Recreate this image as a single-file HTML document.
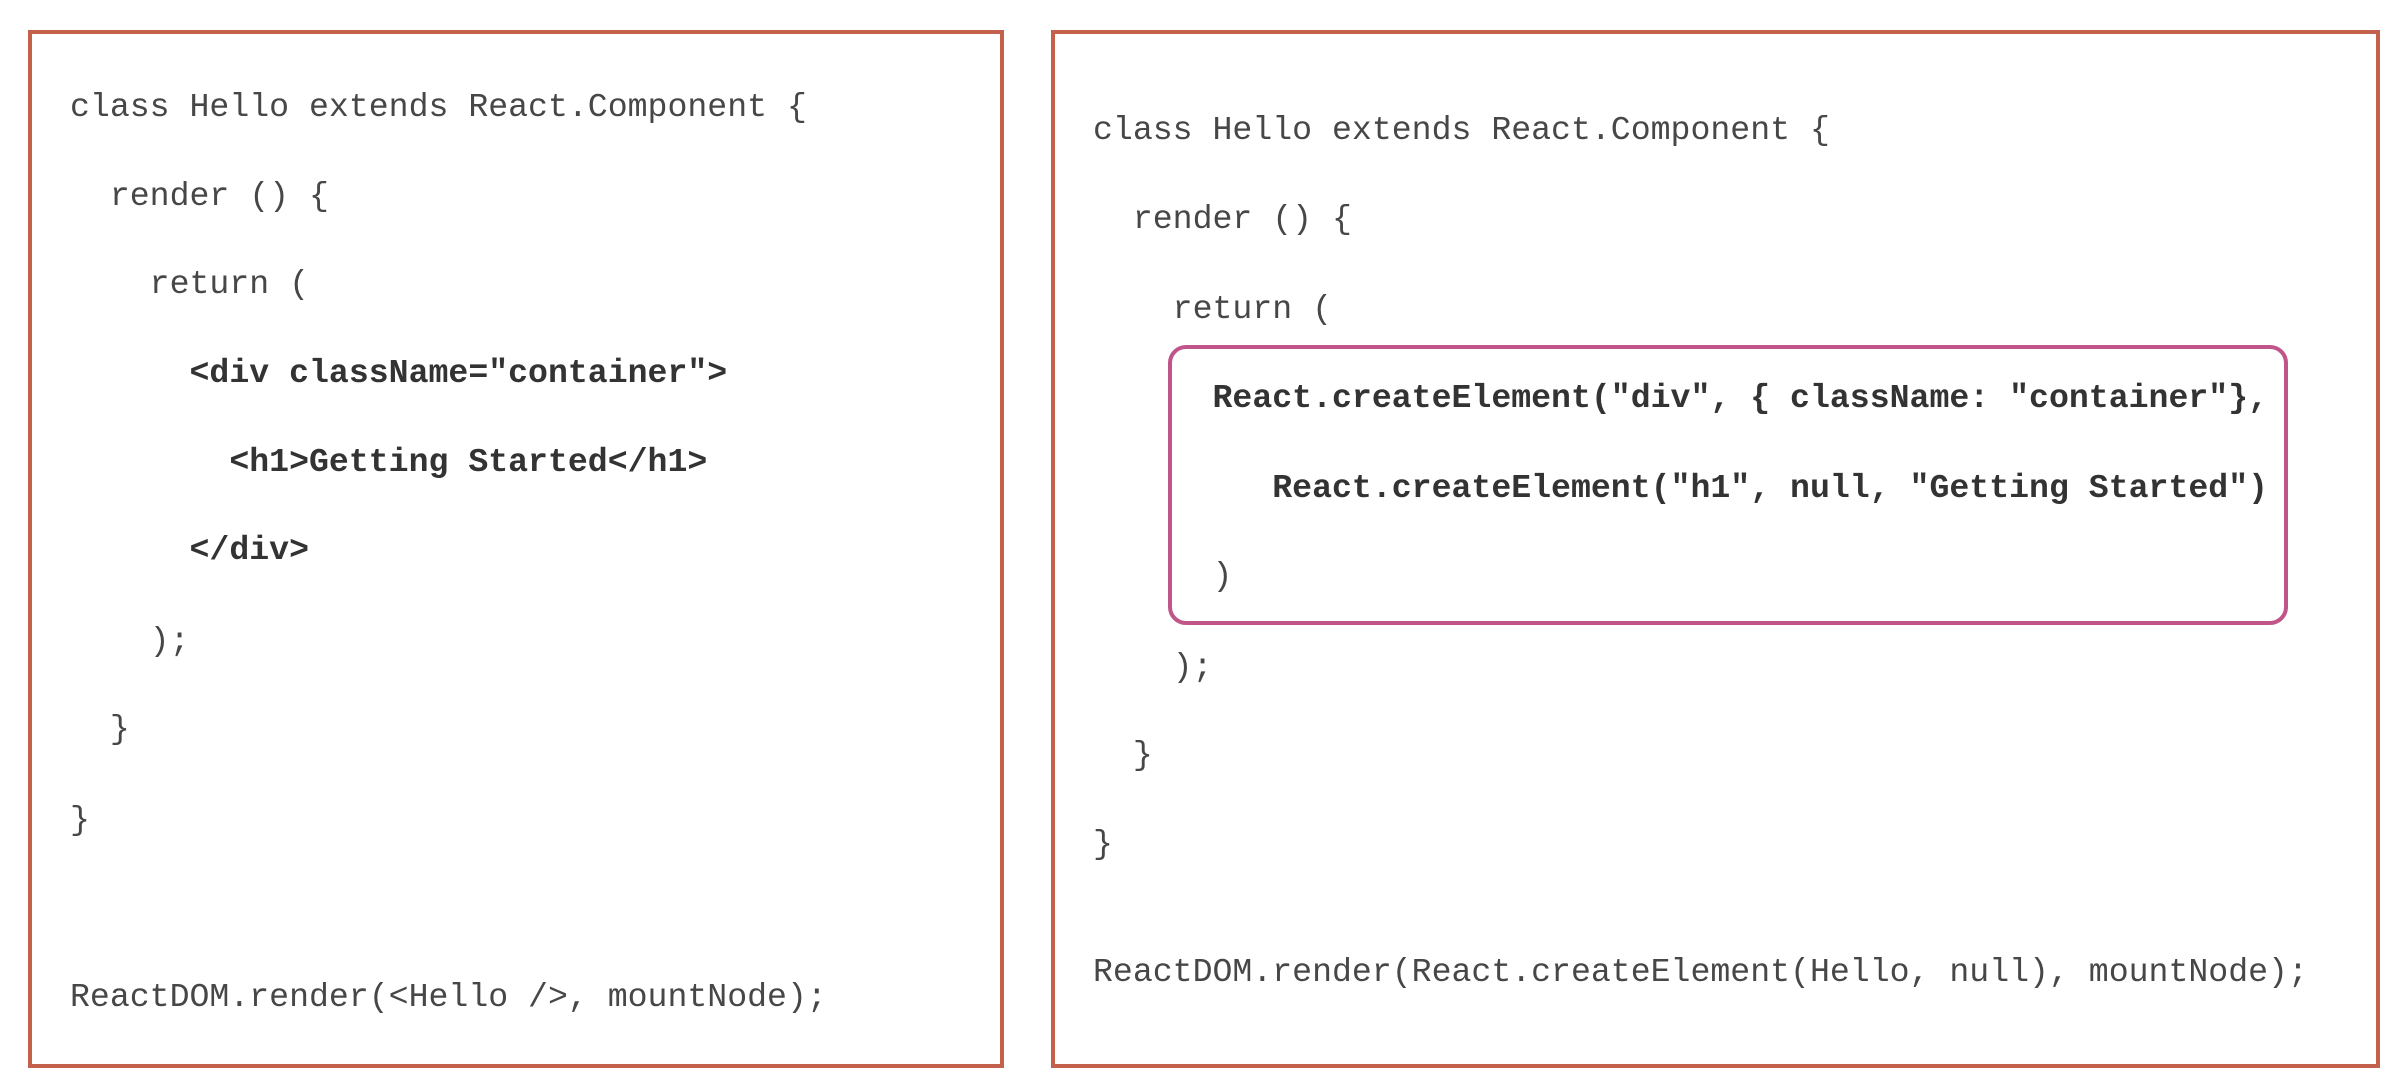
<!DOCTYPE html>
<html><head><meta charset="utf-8"><style>
html,body{margin:0;padding:0;background:#fff;width:2398px;height:1076px;overflow:hidden}
.box{position:absolute;border:4px solid #c3614c;box-sizing:border-box}
.l{position:absolute;font-family:"Liberation Mono",monospace;font-size:33.2px;line-height:40px;height:40px;color:#474747;white-space:pre}
.b{font-weight:bold;color:#333}
.pink{position:absolute;border:4.5px solid #c0558a;border-radius:18px;box-sizing:border-box}
</style></head><body>
<div class="box" style="left:28px;top:30px;width:976px;height:1038px"></div>
<div class="box" style="left:1051px;top:30px;width:1329px;height:1038px"></div>
<div class="pink" style="left:1168px;top:345px;width:1120px;height:280px"></div>

<div class="l" style="left:70px;top:87px">class Hello extends React.Component {</div>
<div class="l" style="left:70px;top:176px">  render () {</div>
<div class="l" style="left:70px;top:264px">    return (</div>
<div class="l b" style="left:70px;top:353px">      &lt;div className="container"&gt;</div>
<div class="l b" style="left:70px;top:442px">        &lt;h1&gt;Getting Started&lt;/h1&gt;</div>
<div class="l b" style="left:70px;top:530px">      &lt;/div&gt;</div>
<div class="l" style="left:70px;top:621px">    );</div>
<div class="l" style="left:70px;top:709px">  }</div>
<div class="l" style="left:70px;top:800px">}</div>
<div class="l" style="left:70px;top:977px">ReactDOM.render(&lt;Hello /&gt;, mountNode);</div>

<div class="l" style="left:1093px;top:110px">class Hello extends React.Component {</div>
<div class="l" style="left:1093px;top:199px">  render () {</div>
<div class="l" style="left:1093px;top:289px">    return (</div>
<div class="l b" style="left:1093px;top:378px">      React.createElement("div", { className: "container"},</div>
<div class="l b" style="left:1093px;top:468px">         React.createElement("h1", null, "Getting Started")</div>
<div class="l" style="left:1093px;top:556px">      )</div>
<div class="l" style="left:1093px;top:647px">    );</div>
<div class="l" style="left:1093px;top:735px">  }</div>
<div class="l" style="left:1093px;top:824px">}</div>
<div class="l" style="left:1093px;top:952px">ReactDOM.render(React.createElement(Hello, null), mountNode);</div>
</body></html>
